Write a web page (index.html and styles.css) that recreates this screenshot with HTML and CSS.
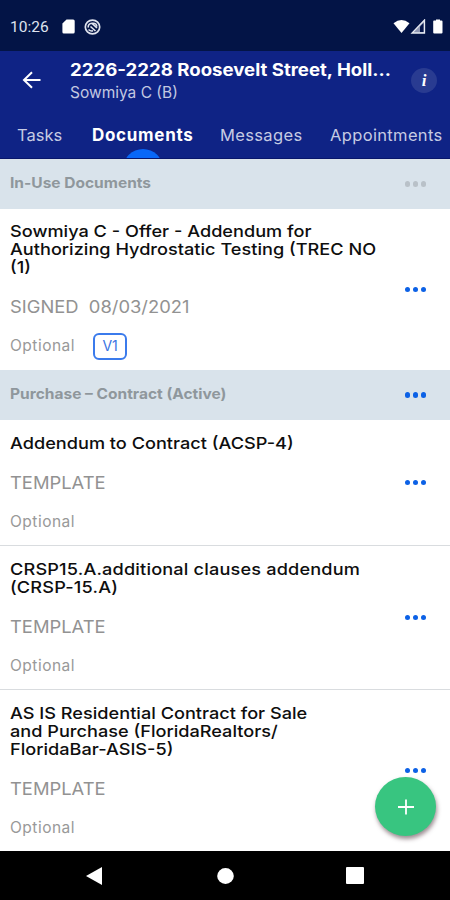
FILE: index.html
```html
<!DOCTYPE html>
<html lang="en">
  <head>
    <meta charset="UTF-8" />
    <title>Documents</title>
    <link rel="stylesheet" href="styles.css">
  </head>
  <body>
    <div class="status-bar">
      <span class="clock">10:26</span>
      <svg class="status-sd" width="13" height="15" viewBox="0 0 13 15"><path d="M4.5 0.5H11.2Q12.7 0.5 12.7 2V13Q12.7 14.5 11.2 14.5H1.8Q0.4 14.5 0.4 13V4.5Z" fill="#fff"/></svg>
      <svg class="status-sync" width="17" height="16" viewBox="0 0 17 16" fill="none" stroke="#dfe3ee"><ellipse cx="8.5" cy="8" rx="7.2" ry="6.9" stroke-width="1.7"/><path d="M4.200 8.500Q4 4.500 8 4.300L13 9M6.500 7.500L11.500 12M4.500 10.500Q6.500 12.500 9 11.800M8.500 4.300Q12.500 4 12.800 7.500" stroke-width="1.6"/></svg>
      <svg class="status-signal" width="50" height="16" viewBox="0 0 50 16">
        <path d="M0.5 4.3Q8.5 -2.2 16.5 4.3L8.5 14Z" fill="#fff"/>
        <path d="M31.5 1V14H19Z" fill="#8f97b3" stroke="#e8ebf2" stroke-width="1.3"/>
        <path d="M27 7.500L30.500 4V13H27z" fill="#04154a"/>
        <path d="M41 1.5h2V0.5h4v1h1.5q1 0 1 1V13.5q0 1-1 1h-7.3q-1 0-1-1V2.500q0-1 .8-1z" fill="#fff"/>
      </svg>
    </div>

    <header class="header">
      <div class="header-top">
        <svg class="back" width="20" height="18" viewBox="0 0 20 18" fill="none" stroke="#fff" stroke-width="2"><path d="M18.500 9H2M10 1.300L2 9L10 16.700"/></svg>
        <div class="header-text">
          <h1>2226-2228 Roosevelt Street, Holl...</h1>
          <p>Sowmiya C (B)</p>
        </div>
        <div class="info">i</div>
      </div>
      <nav class="tabs">
        <a class="tab tab-tasks">Tasks</a>
        <a class="tab tab-active">Documents</a>
        <a class="tab tab-messages">Messages</a>
        <a class="tab tab-appointments">Appointments</a>
      </nav>
    </header>

    <main class="list">
      <div class="group">
        <h2>In-Use Documents</h2>
        <div class="dots dots-off"><i></i><i></i><i></i></div>
      </div>
      <div class="doc doc-first">
        <div class="doc-body">
          <h3>Sowmiya C - Offer - Addendum for<br>Authorizing Hydrostatic Testing (TREC NO<br>(1)</h3>
          <p class="state"><span class="signed">SIGNED</span><span class="date">08/03/2021</span></p>
          <p class="optional">Optional <span class="version">V1</span></p>
        </div>
        <div class="dots"><i></i><i></i><i></i></div>
      </div>

      <div class="group">
        <h2>Purchase – Contract (Active)</h2>
        <div class="dots"><i></i><i></i><i></i></div>
      </div>
      <div class="doc doc-short">
        <div class="doc-body">
          <h3>Addendum to Contract (ACSP-4)</h3>
          <p class="state">TEMPLATE</p>
          <p class="optional">Optional</p>
        </div>
        <div class="dots"><i></i><i></i><i></i></div>
      </div>
      <div class="doc">
        <div class="doc-body">
          <h3 class="wide">CRSP15.A.additional clauses addendum<br>(CRSP-15.A)</h3>
          <p class="state">TEMPLATE</p>
          <p class="optional">Optional</p>
        </div>
        <div class="dots"><i></i><i></i><i></i></div>
      </div>
      <div class="doc doc-last">
        <div class="doc-body">
          <h3>AS IS Residential Contract for Sale<br>and Purchase (FloridaRealtors/<br>FloridaBar-ASIS-5)</h3>
          <p class="state">TEMPLATE</p>
          <p class="optional">Optional</p>
        </div>
        <div class="dots"><i></i><i></i><i></i></div>
      </div>
    </main>

    <div class="fab">
      <svg width="16" height="16" viewBox="0 0 16 16" stroke="#fff" stroke-width="1.8"><path d="M8 0.500V15.500M0 8H16"/></svg>
    </div>

    <footer class="nav-bar">
      <svg width="16" height="18" viewBox="0 0 16 18"><path d="M0 9L16 0V18Z" fill="#fff"/></svg>
      <svg class="nav-home" width="17" height="16" viewBox="0 0 17 16"><ellipse cx="8.500" cy="8" rx="8.300" ry="7.900" fill="#fff"/></svg>
      <svg width="18" height="17" viewBox="0 0 18 17"><rect width="18" height="17" rx="1" fill="#fff"/></svg>
    </footer>
  </body>
</html>
```
FILE: styles.css
```css
* {
  box-sizing: border-box;
  margin: 0;
  padding: 0;
}
body {
  position: relative;
  width: 450px;
  height: 900px;
  display: flex;
  flex-direction: column;
  overflow: hidden;
  background-color: #fff;
  font-family: Inter, "Liberation Sans", sans-serif;
}

/* status bar */
.status-bar {
  height: 51px;
  flex: none;
  display: flex;
  align-items: center;
  padding: 2px 7px 0 10px;
  background-color: #031446;
}
.clock {
  width: 52px;
  color: #dfe3ee;
  font-family: Roboto, sans-serif;
  font-size: 15.5px;
}
.status-sync {
  margin-left: 9px;
}
.status-signal {
  margin-left: auto;
}

/* header */
.header {
  height: 108px;
  flex: none;
  background-color: #0f2385;
  border-bottom: 1px solid #08166b;
}
.header-top {
  height: 60px;
  display: flex;
  padding-left: 22px;
}
.back {
  margin-top: 20px;
}
.header-text {
  width: 340px;
  padding: 9px 0 0 28px;
  white-space: nowrap;
}
.header-text h1 {
  color: #fff;
  font-size: 17px;
  line-height: 20px;
  font-weight: 700;
  transform: scaleX(1.095);
  transform-origin: left;
}
.header-text p {
  margin-top: 3px;
  color: #c3c8e1;
  font-size: 15.5px;
  line-height: 20px;
}
.info {
  width: 26px;
  height: 25px;
  margin: 17px 0 0 29px;
  border-radius: 50%;
  background-color: #293b91;
  color: #fff;
  font: italic bold 17px/25px "Liberation Serif", serif;
  text-align: center;
}
.tabs {
  height: 47px;
  display: flex;
  padding-left: 17px;
  overflow: hidden;
  white-space: nowrap;
}
.tab {
  position: relative;
  flex: none;
  height: 47px;
  padding-top: 14px;
  color: #c6cbe3;
  font-size: 16.5px;
  line-height: 20px;
  letter-spacing: 0.35px;
}
.tab-tasks {
  width: 75px;
  letter-spacing: 0;
}
.tab-active {
  width: 128px;
  color: #fff;
  font-size: 17px;
  font-weight: 700;
  letter-spacing: 0.7px;
}
.tab-active::after {
  content: "";
  position: absolute;
  left: 31px;
  top: 38px;
  width: 40px;
  height: 40px;
  border-radius: 50%;
  background-color: #0867f8;
}
.tab-messages {
  width: 110px;
}

/* document list */
.list {
  flex: 1;
  min-height: 0;
  overflow: hidden;
}
.group {
  height: 50px;
  display: flex;
  align-items: center;
  justify-content: space-between;
  padding: 0 24px 0 10px;
  background-color: #d9e3eb;
}
.group h2 {
  padding-bottom: 3px;
  color: #8f979c;
  font-size: 14.5px;
  line-height: 20px;
  font-weight: 700;
  transform: scaleX(1.07);
  transform-origin: left;
}
.doc {
  display: flex;
  align-items: center;
  justify-content: space-between;
  height: 144px;
  padding: 0 24px 0 10px;
  border-bottom: 1px solid #d9dcdf;
}
.doc-first {
  height: 161px;
  border-bottom: none;
}
.doc-short {
  height: 126px;
}
.doc-last {
  height: 162px;
}
.doc-body {
  flex: 1;
  align-self: flex-start;
  padding-top: 14px;
  white-space: nowrap;
}
.doc-first .doc-body {
  padding-top: 13px;
}
.doc h3 {
  width: 340px;
  color: #0e0e0e;
  font-size: 16.5px;
  line-height: 18px;
  font-weight: 500;
  transform: scaleX(1.1);
  transform-origin: left;
}
.doc h3.wide {
  letter-spacing: 0.15px;
}
.state {
  display: flex;
  width: 200px;
  margin-top: 21px;
  color: #929292;
  font-size: 17px;
  line-height: 20px;
  transform: scaleX(1.08);
  transform-origin: left;
}
.signed {
  width: 73px;
}
.optional {
  display: flex;
  align-items: center;
  height: 20px;
  margin-top: 18px;
  color: #999;
  font-size: 15.5px;
  letter-spacing: 0.5px;
}
.version {
  width: 34px;
  height: 27px;
  margin: 3px 0 0 18px;
  border: 2px solid #3b7bec;
  border-radius: 6px;
  color: #3b75e3;
  font-size: 14px;
  line-height: 21px;
  letter-spacing: 0;
  text-align: center;
}
.dots {
  display: flex;
  gap: 2.5px;
  width: 21px;
}
.dots i {
  width: 5.3px;
  height: 5.3px;
  border-radius: 50%;
  background-color: #0c61e6;
}
.dots-off i {
  background-color: #b9c1c8;
}

/* floating add button */
.fab {
  position: absolute;
  left: 375px;
  top: 777px;
  width: 61px;
  height: 59px;
  display: flex;
  align-items: center;
  justify-content: center;
  border-radius: 50%;
  background-color: #38c580;
  box-shadow: 1px 3px 4px rgba(60, 30, 40, 0.5);
}

/* android navigation */
.nav-bar {
  height: 49px;
  flex: none;
  display: flex;
  align-items: center;
  justify-content: space-between;
  padding: 0 86px;
  background-color: #000;
}
.nav-home {
  margin-left: 2px;
}
```
